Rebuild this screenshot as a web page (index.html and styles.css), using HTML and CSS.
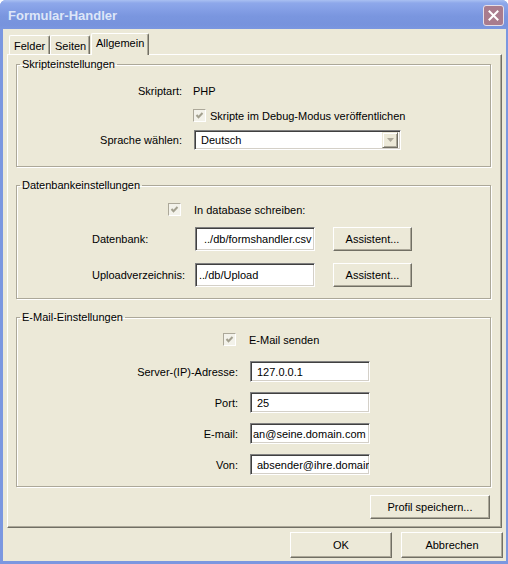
FILE: index.html
```html
<!DOCTYPE html>
<html lang="de">
<head>
    <meta charset="UTF-8">
    <title>Formular-Handler</title>
    <link rel="stylesheet" href="styles.css">
</head>
<body>
    <div class="window">
        <!-- Titelleiste -->
        <div class="titlebar">
            <span class="title">Formular-Handler</span>
            <span class="close-btn">
                <svg width="11" height="11" viewBox="0 0 11 11"><path d="M1.5 1.5L9.5 9.5M9.5 1.5L1.5 9.5" stroke="#fff" stroke-width="2" stroke-linecap="square"/></svg>
            </span>
        </div>

        <div class="client">
            <!-- Reiter -->
            <div class="tabs">
                <div class="tab tab-felder">Felder</div>
                <div class="tab tab-seiten">Seiten</div>
                <div class="tab tab-active">Allgemein</div>
            </div>

            <div class="panel">
                <fieldset class="group script-group">
                    <legend>Skripteinstellungen</legend>
                    <div class="row row-info">
                        <span class="label">Skriptart:</span>
                        <span>PHP</span>
                    </div>
                    <div class="row row-check">
                        <span class="check"><svg width="11" height="11" viewBox="0 0 11 11"><path d="M2.5 5L4.5 7.2L8.5 3" fill="none" stroke="#a3a08f" stroke-width="2"/></svg></span>
                        <span class="check-text">Skripte im Debug-Modus veröffentlichen</span>
                    </div>
                    <div class="row row-select">
                        <span class="label">Sprache wählen:</span>
                        <div class="select sunken">
                            <span class="select-value">Deutsch</span>
                            <span class="drop"><svg width="7" height="4" viewBox="0 0 7 4"><path d="M0 0H7L3.5 4Z" fill="#aca899"/></svg></span>
                        </div>
                    </div>
                </fieldset>

                <fieldset class="group db-group">
                    <legend>Datenbankeinstellungen</legend>
                    <div class="row row-check">
                        <span class="check-cell">
                            <span class="check"><svg width="11" height="11" viewBox="0 0 11 11"><path d="M2.5 5L4.5 7.2L8.5 3" fill="none" stroke="#a3a08f" stroke-width="2"/></svg></span>
                        </span>
                        <span>In database schreiben:</span>
                    </div>
                    <div class="row row-field">
                        <span class="label">Datenbank:</span>
                        <div class="field sunken field-wide">../db/formshandler.csv</div>
                        <div class="btn btn-assist">Assistent...</div>
                    </div>
                    <div class="row row-field row-second">
                        <span class="label">Uploadverzeichnis:</span>
                        <div class="field sunken">../db/Upload</div>
                        <div class="btn btn-assist">Assistent...</div>
                    </div>
                </fieldset>

                <fieldset class="group mail-group">
                    <legend>E-Mail-Einstellungen</legend>
                    <div class="row row-check">
                        <span class="check-cell">
                            <span class="check"><svg width="11" height="11" viewBox="0 0 11 11"><path d="M2.5 5L4.5 7.2L8.5 3" fill="none" stroke="#a3a08f" stroke-width="2"/></svg></span>
                        </span>
                        <span>E-Mail senden</span>
                    </div>
                    <div class="row row-field row-first">
                        <span class="label">Server-(IP)-Adresse:</span>
                        <div class="field sunken">127.0.0.1</div>
                    </div>
                    <div class="row row-field">
                        <span class="label">Port:</span>
                        <div class="field sunken">25</div>
                    </div>
                    <div class="row row-field">
                        <span class="label">E-mail:</span>
                        <div class="field sunken field-scrolled">an@seine.domain.com</div>
                    </div>
                    <div class="row row-field">
                        <span class="label">Von:</span>
                        <div class="field sunken">absender@ihre.domain</div>
                    </div>
                </fieldset>

                <div class="panel-actions">
                    <div class="btn btn-profile">Profil speichern...</div>
                </div>
            </div>

            <!-- Dialogschaltflächen -->
            <div class="footer">
                <div class="btn btn-dialog">OK</div>
                <div class="btn btn-dialog">Abbrechen</div>
            </div>
        </div>
    </div>
</body>
</html>
```

FILE: styles.css
```css
body {
    margin: 0;
    background-color: #ffffff;
    font-family: "Liberation Sans", Arial, sans-serif;
    font-size: 11px;
    color: #000000;
}
.window {
    width: 508px;
    height: 564px;
    display: flex;
    flex-direction: column;
    background-color: #7b97e0;
    border-radius: 6px 6px 0 0;
    overflow: hidden;
}
.titlebar {
    flex: none;
    height: 29px;
    box-sizing: border-box;
    display: flex;
    align-items: center;
    justify-content: space-between;
    padding: 0 4px 0 8px;
    background: linear-gradient(#a9c0f2 0, #8ea8ea 3px, #86a1e7 8px, #7a96df 16px, #7793dd 25px, #7b97e0 29px);
}
.title {
    font-size: 13px;
    font-weight: bold;
    color: #dde6f8;
    margin-top: 1px;
}
.close-btn {
    width: 21px;
    height: 21px;
    margin-top: 1px;
    box-sizing: border-box;
    border: 1px solid #e6dfe8;
    border-radius: 3px;
    background-color: #a97c8e;
    display: flex;
    align-items: center;
    justify-content: center;
}
.client {
    flex: 1;
    margin: 0 2px 3px 3px;
    padding: 4px 0 0 4px;
    background-color: #ece9d8;
}

/* Reiter */
.tabs {
    display: flex;
    align-items: flex-end;
    height: 21px;
    padding-left: 2px;
    position: relative;
    z-index: 1;
}
.tab {
    height: 19px;
    box-sizing: border-box;
    padding: 4px 0 0 4px;
    line-height: 13px;
    border-top: 1px solid #ffffff;
    border-left: 1px solid #ffffff;
    border-right: 1px solid #716f64;
    box-shadow: inset -1px 0 #aca899;
    border-radius: 2px 2px 0 0;
    background-color: #ece9d8;
}
.tab-felder {
    width: 41px;
}
.tab-seiten {
    width: 40px;
}
.tab-active {
    width: 58px;
    height: 22px;
    margin-left: 1px;
    margin-bottom: -1px;
    padding-top: 3px;
}
.panel {
    width: 495px;
    height: 474px;
    box-sizing: border-box;
    border: 1px solid;
    border-color: #ffffff #716f64 #716f64 #ffffff;
    box-shadow: inset -1px -1px #aca899;
    padding: 3px 10px 0 8px;
}

/* Gruppenfelder */
.group {
    margin: 0;
    padding: 0;
    min-width: 0;
    border: 1px solid #aca899;
    box-shadow: inset 1px 1px #ffffff, 1px 1px #ffffff;
}
.group + .group {
    margin-top: 12px;
}
.group legend {
    margin-left: 3px;
    padding: 0 2px;
    line-height: 13px;
}
.row {
    display: flex;
    align-items: center;
}
.label {
    flex: none;
}
.check {
    width: 13px;
    height: 13px;
    box-sizing: border-box;
    border: 1px solid;
    border-color: #aca899 #ffffff #ffffff #aca899;
    background-color: #f3f2ea;
    display: flex;
    align-items: center;
    justify-content: center;
    flex: none;
}
.check-cell {
    flex: none;
    display: flex;
    justify-content: flex-end;
}
.sunken {
    box-sizing: border-box;
    border: 1px solid;
    border-color: #808080 #ffffff #ffffff #808080;
    box-shadow: inset 1px 1px #404040, inset -1px -1px #d4d0c8;
    background-color: #ffffff;
}
.field {
    width: 120px;
    flex: none;
    display: flex;
    align-items: center;
    padding-left: 4px;
    white-space: nowrap;
    overflow: hidden;
}
.btn {
    box-sizing: border-box;
    display: flex;
    align-items: center;
    justify-content: center;
    border: 1px solid;
    border-color: #ffffff #716f64 #716f64 #ffffff;
    box-shadow: inset -1px -1px #aca899;
    background-color: #ece9d8;
    flex: none;
}

/* Skripteinstellungen */
.script-group {
    padding-bottom: 16px;
}
.script-group .label {
    width: 165px;
    margin-right: 11px;
    text-align: right;
}
.script-group .row-info {
    margin-top: 13px;
    height: 13px;
}
.script-group .row-check {
    margin-top: 11px;
    height: 15px;
    padding-left: 176px;
}
.check-text {
    margin-left: 4px;
}
.script-group .row-select {
    margin-top: 7px;
    height: 20px;
}
.select {
    width: 207px;
    height: 20px;
    margin-left: 1px;
    padding: 2px;
    display: flex;
    align-items: center;
}
.select-value {
    flex: 1;
    padding-left: 4px;
}
.drop {
    width: 16px;
    height: 16px;
    box-sizing: border-box;
    border: 1px solid;
    border-color: #ece9d8 #716f64 #716f64 #ece9d8;
    box-shadow: inset 1px 1px #ffffff, inset -1px -1px #aca899;
    background-color: #ece9d8;
    display: flex;
    align-items: center;
    justify-content: center;
}

/* Datenbankeinstellungen */
.db-group {
    padding-bottom: 11px;
}
.db-group .row-check {
    margin-top: 10px;
    height: 15px;
}
.db-group .check-cell {
    width: 177px;
    box-sizing: border-box;
    padding-right: 13px;
}
.db-group .row-field {
    margin-top: 10px;
    height: 24px;
}
.db-group .row-second {
    margin-top: 12px;
}
.db-group .label {
    width: 178px;
    box-sizing: border-box;
    padding-left: 75px;
}
.db-group .field {
    height: 24px;
    padding-left: 3px;
}
.db-group .field-wide {
    padding-left: 8px;
}
.btn-assist {
    width: 79px;
    height: 24px;
    margin-left: 18px;
}

/* E-Mail-Einstellungen */
.mail-group {
    padding-bottom: 11px;
}
.mail-group .row-check {
    margin-top: 8px;
    height: 15px;
}
.mail-group .check-cell {
    width: 219px;
    margin-right: 13px;
}
.mail-group .row-field {
    margin-top: 10px;
    height: 21px;
}
.mail-group .row-first {
    margin-top: 14px;
}
.mail-group .label {
    width: 221px;
    margin-right: 12px;
    text-align: right;
}
.mail-group .field {
    height: 21px;
    padding-left: 6px;
}
.mail-group .field-scrolled {
    padding-left: 2px;
}
.panel-actions {
    display: flex;
    justify-content: flex-end;
    margin-top: 8px;
    padding-right: 1px;
}
.btn-profile {
    width: 120px;
    height: 24px;
}
.footer {
    display: flex;
    justify-content: flex-end;
    gap: 9px;
    margin-top: 4px;
    padding-right: 3px;
}
.btn-dialog {
    width: 102px;
    height: 26px;
}
```
